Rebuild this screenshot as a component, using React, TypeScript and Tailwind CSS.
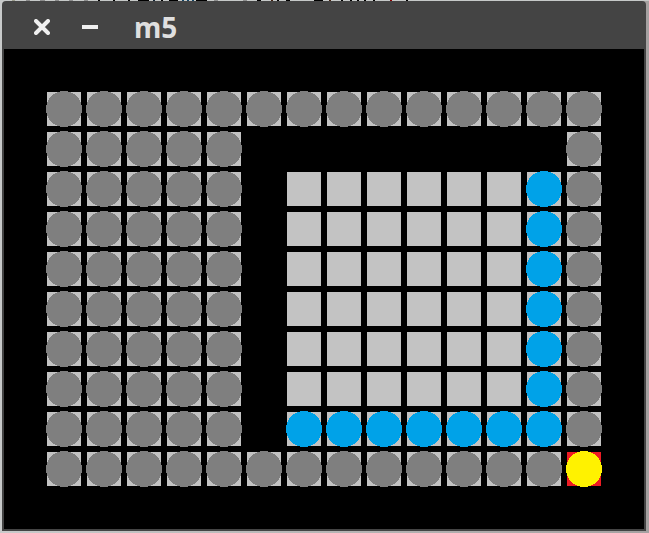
type Kind = "floor" | "wall" | "path" | "goal" | "empty";

const KINDS: Record<string, Kind> = {
  "#": "wall",
  ".": "floor",
  "*": "path",
  "@": "goal",
  " ": "empty",
};

const MAZE = [
  "##############",
  "#####        #",
  "##### ......*#",
  "##### ......*#",
  "##### ......*#",
  "##### ......*#",
  "##### ......*#",
  "##### ......*#",
  "##### *******#",
  "#############@",
];

const SQUARE: Record<Kind, string> = {
  floor: "bg-[#c3c3c3]",
  wall: "bg-[#c3c3c3]",
  path: "bg-[#c3c3c3]",
  goal: "bg-[#ed1c24]",
  empty: "bg-black",
};

const DISC: Record<Kind, string> = {
  floor: "",
  wall: "fill-[#7f7f7f]",
  path: "fill-[#00a2e8]",
  goal: "fill-[#fff200]",
  empty: "",
};

// [start, length, colour] of the desktop text showing above the window
const SPECKS: [number, number, string][] = [
  [12, 3, "#9a9a8a"], [26, 4, "#8c8c8c"], [40, 5, "#8c8c8c"], [55, 4, "#8c8c8c"],
  [69, 4, "#8c8c8c"], [84, 4, "#8c8c8c"], [98, 2, "#000"], [113, 2, "#000"],
  [128, 2, "#000"], [138, 11, "#000"], [153, 2, "#123"], [161, 2, "#000"],
  [169, 9, "#000"], [182, 2, "#146"], [187, 2, "#146"], [192, 2, "#146"],
  [196, 11, "#000"], [214, 4, "#8c8c8c"], [243, 4, "#8c8c8c"], [257, 4, "#000"],
  [271, 2, "#421"], [277, 2, "#000"], [286, 4, "#000"], [314, 9, "#000"],
  [329, 2, "#421"], [341, 2, "#000"], [350, 2, "#000"], [357, 2, "#000"],
  [364, 2, "#000"], [373, 2, "#000"], [390, 2, "#800"], [406, 2, "#000"],
];

function Cell({ kind }: { kind: Kind }) {
  return (
    <div className="flex size-10 items-center justify-center">
      <div className={`flex size-[34px] items-center justify-center ${SQUARE[kind]}`}>
        {DISC[kind] && (
          <svg className={`size-9 shrink-0 ${DISC[kind]}`} viewBox="0 0 36 36" shapeRendering="crispEdges" aria-hidden="true">
            <circle cx="18" cy="18" r="18" />
          </svg>
        )}
      </div>
    </div>
  );
}

export default function App() {
  return (
    <div className="flex min-h-screen flex-col bg-linear-to-r from-[#c8caca] to-[#a5a1a1]">
      <svg className="block h-px w-full bg-[#c6c9c8]" shapeRendering="crispEdges" aria-hidden="true">
        {SPECKS.map(([x, length, color]) => (
          <rect key={x} x={x} y="0" width={length} height="1" fill={color} />
        ))}
      </svg>
      <div className="mr-[3px] mb-0.5 ml-0.5 flex grow flex-col rounded-t-[4px] bg-[#444444]">
        <header className="flex h-12 items-center pt-1 pl-8">
          <button type="button" aria-label="Close" className="size-4">
            <svg viewBox="0 0 16 16" className="size-4" aria-hidden="true">
              <path d="M2 2 L14 14 M14 2 L2 14" stroke="#f0f0f0" strokeWidth="4" strokeLinecap="round" />
            </svg>
          </button>
          <button type="button" aria-label="Minimize" className="ml-8 size-4">
            <svg viewBox="0 0 16 16" className="size-4" shapeRendering="crispEdges" aria-hidden="true">
              <rect y="6" width="16" height="4" fill="#f0f0f0" />
            </svg>
          </button>
          <h1 className="ml-9 font-['Noto_Sans',sans-serif] text-[28px] leading-9 font-bold text-[#dfdfdf]">m5</h1>
        </header>
        <main className="mx-0.5 mb-0.5 flex grow flex-col bg-black p-10">
          {MAZE.map((row, y) => (
            <div key={y} className="flex">
              {row.split("").map((mark, x) => (
                <Cell key={x} kind={KINDS[mark]} />
              ))}
            </div>
          ))}
        </main>
      </div>
    </div>
  );
}
